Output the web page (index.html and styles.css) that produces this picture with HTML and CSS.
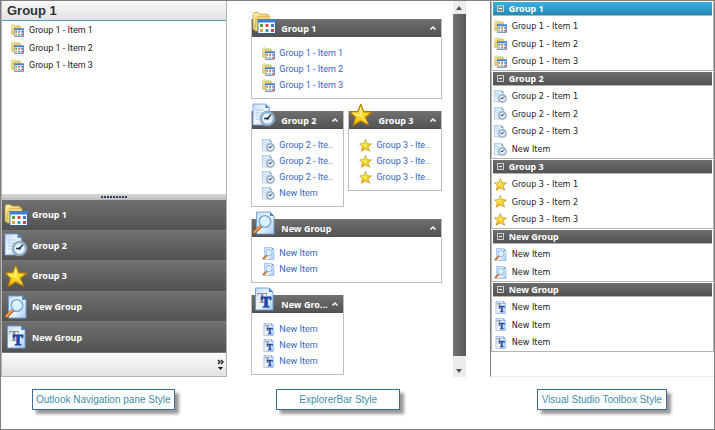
FILE: index.html
```html
<!DOCTYPE html>
<html lang="en">
<head>
    <meta charset="UTF-8">
    <meta name="viewport" content="width=device-width, initial-scale=1.0">
    <title>Navigation Styles</title>
    <link rel="stylesheet" href="styles.css">
</head>
<body>
    <!-- Shared icons -->
    <svg class="icon-defs" width="0" height="0" aria-hidden="true">
        <defs>
            <linearGradient id="gold" x1="0" y1="0" x2="1" y2="1">
                <stop offset="0" stop-color="#fff3a8"/>
                <stop offset="1" stop-color="#dcae3c"/>
            </linearGradient>
            <linearGradient id="star-fill" x1="0" y1="0" x2="0" y2="1">
                <stop offset="0" stop-color="#ffe95a"/>
                <stop offset="0.5" stop-color="#ffdc28"/>
                <stop offset="1" stop-color="#f5b90a"/>
            </linearGradient>
            <linearGradient id="paper" x1="0" y1="0" x2="1" y2="1">
                <stop offset="0" stop-color="#c3dcfa"/>
                <stop offset="0.5" stop-color="#f2f8ff"/>
                <stop offset="1" stop-color="#a5c8f2"/>
            </linearGradient>
        </defs>
        <symbol id="folder" viewBox="0 0 24 24">
            <path d="M1 3.5 2 1.500h4.500l1.200 1.500H15l2 1.500V10H5v10l-4-1.500z" fill="url(#gold)" stroke="#b98f2b" stroke-width=".6"/>
            <path d="M3 20 4 7.500 6 5.500h12V9H6v11z" fill="#f3d775" stroke="#c39c38" stroke-width=".5"/>
            <rect x="6" y="8.500" width="17.500" height="14" fill="#fdfdff" stroke="#346bb5" stroke-width=".8"/>
            <path d="M6 8.500h17.500v3H6z" fill="#3c7fd8"/>
            <path d="M6.500 22.500h17V11" fill="none" stroke="#2c5c9e"/>
            <path d="M8 13h3v3H8z" fill="#4fa43b"/>
            <path d="M13.500 13h3v3h-3z" fill="#d5523e"/>
            <path d="M19 13h3v3h-3z" fill="#4778c8"/>
            <path d="M8 18h3v3H8z" fill="#f09d28"/>
            <path d="M13.500 18h3v3h-3z" fill="#3a9fbb"/>
            <path d="M19 18h3v3h-3z" fill="#c94545"/>
        </symbol>
        <symbol id="clock" viewBox="0 0 24 24">
            <path d="M1 1h12.500l4 4v17H1z" fill="url(#paper)" stroke="#6b9bd8" stroke-width=".8"/>
            <path d="M13.500 1v4h4z" fill="#3f86dd"/>
            <path d="M4 7h8M4 10h6M4 13h4M4 16h3" stroke="#9ec1ea" stroke-width=".8"/>
            <circle cx="15.500" cy="15.500" r="7.500" fill="#a8b2bd" stroke="#8796a6" stroke-width=".7"/>
            <circle cx="15.500" cy="15.500" r="5.800" fill="#eaf4fd" stroke="#7fb0e2" stroke-width="1.200"/>
            <path d="M19 11.800l-3.500 3.700h-3.500" fill="none" stroke="#24394f" stroke-width="1.500"/>
            <circle cx="15.500" cy="15.500" r="1.300" fill="#24394f"/>
        </symbol>
        <symbol id="star" viewBox="0 0 24 24">
            <path d="M11.800 1.200 14.700 8.800 22.800 9.200 16.600 14.300 19.500 22.300 11.700 18 4.200 22.500 6.400 14.300 1.200 9 8.700 8.700z" fill="url(#star-fill)" stroke="#b57b08" stroke-width="1.200" stroke-linejoin="round"/>
            <path d="M11.800 4v9l-8-3M11.800 13l6.500 7" fill="none" stroke="#fff6a6" stroke-width="1"/>
        </symbol>
        <symbol id="search" viewBox="0 0 24 24">
            <path d="M4.500 1H18l4 4v18H4.500z" fill="url(#paper)" stroke="#6b9bd8" stroke-width=".9"/>
            <path d="M18 1v4h4z" fill="#3f86dd"/>
            <path d="M2.500 21.500l7-7" stroke="#a9561d" stroke-width="3.400" stroke-linecap="round"/>
            <path d="M2.500 21l6.500-6.500" stroke="#f3a35b" stroke-width="1.800" stroke-linecap="round"/>
            <circle cx="13" cy="10.500" r="5.800" fill="#d9f1ff" stroke="#7fa9d6" stroke-width="1.500"/>
            <path d="M9.500 9.500q1-3 4-3" fill="none" stroke="#fff" stroke-width="1.500"/>
        </symbol>
        <symbol id="text" viewBox="0 0 24 24">
            <path d="M3.500 1H17l4 4v18H3.500z" fill="url(#paper)" stroke="#6b9bd8" stroke-width=".9"/>
            <path d="M17 1v4h4z" fill="#3f86dd"/>
            <text x="5" y="15.500" class="glyph glyph-back">T</text>
            <text x="9" y="19.500" class="glyph glyph-front">T</text>
        </symbol>
        <symbol id="chevron" viewBox="0 0 8 8">
            <path d="M1.500 5.500 4 3l2.500 2.500" fill="none" stroke="currentColor" stroke-width="1.500"/>
        </symbol>
    </svg>

    <main class="styles">
        <figure class="style">
            <div class="pane outlook">
                <h2 class="outlook-title">Group 1</h2>
                <ul class="items outlook-items">
                    <li><a href="#"><svg class="icon"><use href="#folder"/></svg>Group 1 - Item 1</a></li>
                    <li><a href="#"><svg class="icon"><use href="#folder"/></svg>Group 1 - Item 2</a></li>
                    <li><a href="#"><svg class="icon"><use href="#folder"/></svg>Group 1 - Item 3</a></li>
                </ul>
                <div class="splitter"><span class="grip"></span></div>
                <div class="outlook-groups">
                    <button class="outlook-group"><svg class="icon-lg"><use href="#folder"/></svg>Group 1</button>
                    <button class="outlook-group"><svg class="icon-lg"><use href="#clock"/></svg>Group 2</button>
                    <button class="outlook-group"><svg class="icon-lg"><use href="#star"/></svg>Group 3</button>
                    <button class="outlook-group"><svg class="icon-lg"><use href="#search"/></svg>New Group</button>
                    <button class="outlook-group"><svg class="icon-lg"><use href="#text"/></svg>New Group</button>
                </div>
                <div class="outlook-footer">
                    <button class="more-btn" aria-label="Configure buttons">
                        <svg width="7" height="12" viewBox="0 0 7 12">
                            <path d="M1 1l2 2-2 2M4 1l2 2-2 2" fill="none" stroke="#111" stroke-width="1.300"/>
                            <path d="M1 8h5l-2.500 3z" fill="#111"/>
                        </svg>
                    </button>
                </div>
            </div>
            <figcaption class="caption caption-outlook">Outlook Navigation pane Style</figcaption>
        </figure>

        <figure class="style">
            <div class="pane explorer">
                <div class="explorer-groups">
                    <section class="box wide">
                        <button class="box-header"><svg class="icon-lg"><use href="#folder"/></svg><span>Group 1</span><svg class="chevron"><use href="#chevron"/></svg></button>
                        <ul class="items box-items">
                            <li><a href="#"><svg class="icon"><use href="#folder"/></svg>Group 1 - Item 1</a></li>
                            <li><a href="#"><svg class="icon"><use href="#folder"/></svg>Group 1 - Item 2</a></li>
                            <li><a href="#"><svg class="icon"><use href="#folder"/></svg>Group 1 - Item 3</a></li>
                        </ul>
                    </section>
                    <section class="box">
                        <button class="box-header"><svg class="icon-lg"><use href="#clock"/></svg><span>Group 2</span><svg class="chevron"><use href="#chevron"/></svg></button>
                        <ul class="items box-items">
                            <li><a href="#"><svg class="icon"><use href="#clock"/></svg>Group 2 - Ite..</a></li>
                            <li><a href="#"><svg class="icon"><use href="#clock"/></svg>Group 2 - Ite..</a></li>
                            <li><a href="#"><svg class="icon"><use href="#clock"/></svg>Group 2 - Ite..</a></li>
                            <li><a href="#"><svg class="icon"><use href="#clock"/></svg>New Item</a></li>
                        </ul>
                    </section>
                    <section class="box">
                        <button class="box-header"><svg class="icon-lg"><use href="#star"/></svg><span>Group 3</span><svg class="chevron"><use href="#chevron"/></svg></button>
                        <ul class="items box-items">
                            <li><a href="#"><svg class="icon"><use href="#star"/></svg>Group 3 - Ite..</a></li>
                            <li><a href="#"><svg class="icon"><use href="#star"/></svg>Group 3 - Ite..</a></li>
                            <li><a href="#"><svg class="icon"><use href="#star"/></svg>Group 3 - Ite..</a></li>
                        </ul>
                    </section>
                    <section class="box wide">
                        <button class="box-header"><svg class="icon-lg"><use href="#search"/></svg><span>New Group</span><svg class="chevron"><use href="#chevron"/></svg></button>
                        <ul class="items box-items">
                            <li><a href="#"><svg class="icon"><use href="#search"/></svg>New Item</a></li>
                            <li><a href="#"><svg class="icon"><use href="#search"/></svg>New Item</a></li>
                        </ul>
                    </section>
                    <section class="box">
                        <button class="box-header"><svg class="icon-lg"><use href="#text"/></svg><span>New Gro...</span><svg class="chevron"><use href="#chevron"/></svg></button>
                        <ul class="items box-items">
                            <li><a href="#"><svg class="icon"><use href="#text"/></svg>New Item</a></li>
                            <li><a href="#"><svg class="icon"><use href="#text"/></svg>New Item</a></li>
                            <li><a href="#"><svg class="icon"><use href="#text"/></svg>New Item</a></li>
                        </ul>
                    </section>
                </div>
                <div class="scrollbar">
                    <button class="scroll-btn" aria-label="Scroll up"><svg width="6" height="4" viewBox="0 0 6 4"><path d="M0 4 3 0l3 4z" fill="#555"/></svg></button>
                    <div class="scroll-thumb"></div>
                    <button class="scroll-btn scroll-down" aria-label="Scroll down"><svg width="6" height="4" viewBox="0 0 6 4"><path d="M0 0h6L3 4z" fill="#555"/></svg></button>
                </div>
            </div>
            <figcaption class="caption caption-explorer">ExplorerBar Style</figcaption>
        </figure>

        <figure class="style">
            <div class="pane toolbox">
                <section class="tool-group">
                    <button class="tool-header selected"><span class="minus"></span>Group 1</button>
                    <ul class="items tool-items">
                        <li><a href="#"><svg class="icon"><use href="#folder"/></svg>Group 1 - Item 1</a></li>
                        <li><a href="#"><svg class="icon"><use href="#folder"/></svg>Group 1 - Item 2</a></li>
                        <li><a href="#"><svg class="icon"><use href="#folder"/></svg>Group 1 - Item 3</a></li>
                    </ul>
                </section>
                <section class="tool-group">
                    <button class="tool-header"><span class="minus"></span>Group 2</button>
                    <ul class="items tool-items">
                        <li><a href="#"><svg class="icon"><use href="#clock"/></svg>Group 2 - Item 1</a></li>
                        <li><a href="#"><svg class="icon"><use href="#clock"/></svg>Group 2 - Item 2</a></li>
                        <li><a href="#"><svg class="icon"><use href="#clock"/></svg>Group 2 - Item 3</a></li>
                        <li><a href="#"><svg class="icon"><use href="#clock"/></svg>New Item</a></li>
                    </ul>
                </section>
                <section class="tool-group">
                    <button class="tool-header"><span class="minus"></span>Group 3</button>
                    <ul class="items tool-items">
                        <li><a href="#"><svg class="icon"><use href="#star"/></svg>Group 3 - Item 1</a></li>
                        <li><a href="#"><svg class="icon"><use href="#star"/></svg>Group 3 - Item 2</a></li>
                        <li><a href="#"><svg class="icon"><use href="#star"/></svg>Group 3 - Item 3</a></li>
                    </ul>
                </section>
                <section class="tool-group">
                    <button class="tool-header"><span class="minus"></span>New Group</button>
                    <ul class="items tool-items">
                        <li><a href="#"><svg class="icon"><use href="#search"/></svg>New Item</a></li>
                        <li><a href="#"><svg class="icon"><use href="#search"/></svg>New Item</a></li>
                    </ul>
                </section>
                <section class="tool-group">
                    <button class="tool-header"><span class="minus"></span>New Group</button>
                    <ul class="items tool-items">
                        <li><a href="#"><svg class="icon"><use href="#text"/></svg>New Item</a></li>
                        <li><a href="#"><svg class="icon"><use href="#text"/></svg>New Item</a></li>
                        <li><a href="#"><svg class="icon"><use href="#text"/></svg>New Item</a></li>
                    </ul>
                </section>
            </div>
            <figcaption class="caption caption-toolbox">Visual Studio Toolbox Style</figcaption>
        </figure>
    </main>
</body>
</html>
```

FILE: styles.css
```css
* {
    box-sizing: border-box;
}

body {
    margin: 0;
    background: #fff;
    font-family: Roboto, "Liberation Sans", sans-serif;
    font-size: 9px;
    color: #222;
}

button {
    margin: 0;
    padding: 0;
    border: none;
    background: none;
    font: bold 9px "Noto Sans", sans-serif;
    color: #fff;
    text-align: left;
    cursor: pointer;
}

.icon-defs {
    position: absolute;
}

.glyph {
    font: bold 15px "Liberation Serif", serif;
}

.glyph-back {
    fill: #8a8f96;
}

.glyph-front {
    fill: #1746a8;
    stroke: #1746a8;
    stroke-width: 1px;
}

.icon {
    width: 13px;
    height: 13px;
    flex: none;
}

.icon-lg {
    width: 24px;
    height: 24px;
    flex: none;
}

.styles {
    display: grid;
    grid-template-columns: 226fr 214fr 224fr;
    column-gap: 24px;
    min-height: 100vh;
    border: 1px solid #808080;
}

.style {
    display: flex;
    flex-direction: column;
    align-items: flex-start;
    margin: 0;
    padding-bottom: 19px;
}

.pane {
    flex: 1;
    width: 100%;
}

.items {
    margin: 0;
    padding: 0;
    list-style: none;
}

.items a {
    display: flex;
    align-items: center;
    height: 100%;
    color: #222;
    text-decoration: none;
    white-space: nowrap;
}

.items li {
    height: 18px;
}

.items li:nth-child(even) {
    height: 17px;
}

/* Outlook pane */
.outlook {
    display: flex;
    flex-direction: column;
    border: 1px solid #b4b4b4;
    border-top: none;
}

.outlook-title {
    margin: 0;
    padding: 2px 5px;
    border-bottom: 1px solid #4ba3bf;
    background: linear-gradient(#f8f8f8, #e2e2e2);
    font: bold 13px/15px "Liberation Sans", sans-serif;
    color: #333;
}

.outlook-items {
    flex: 1;
}

.outlook-items a {
    gap: 5px;
    padding-left: 9px;
}

.splitter {
    display: flex;
    align-items: center;
    justify-content: center;
    height: 6px;
    background: linear-gradient(#d8d8d8, #bdbdbd);
}

.grip {
    width: 27px;
    height: 2px;
    background: repeating-linear-gradient(90deg, #35405e 0 2px, transparent 2px 3px);
}

.outlook-groups {
    display: grid;
    grid-auto-rows: 1fr;
    min-height: 153px;
}

.outlook-group {
    display: flex;
    align-items: center;
    gap: 4px;
    padding-left: 2px;
    border-bottom: 1px solid #777;
    background: linear-gradient(#707070, #525252);
}

.outlook-footer {
    display: flex;
    align-items: center;
    justify-content: flex-end;
    height: 23px;
    padding-right: 2px;
    background: linear-gradient(#fcfcfc, #e2e2e2);
}

.more-btn {
    display: flex;
}

/* Explorer bar */
.explorer {
    display: flex;
    justify-content: space-between;
    gap: 11px;
}

.explorer-groups {
    flex: 1;
    display: grid;
    grid-template-columns: 1fr 1fr;
    align-items: start;
    align-content: start;
    gap: 12px 4px;
    padding-top: 18px;
}

.box {
    border: 1px solid #bdbdbd;
    border-top: none;
}

.wide {
    grid-column: 1 / -1;
}

.box-header {
    position: relative;
    display: flex;
    align-items: center;
    justify-content: space-between;
    width: 100%;
    height: 18px;
    padding: 0 4px 0 29px;
    background: linear-gradient(#707070, #525252);
}

/* the large icon sticks out above the header */
.box-header .icon-lg {
    position: absolute;
    left: 0;
    bottom: 2px;
}

.chevron {
    width: 8px;
    height: 8px;
}

.box-items {
    padding: 8px 0 5px 10px;
}

.box-items li,
.box-items li:nth-child(even) {
    height: 16px;
}

.box-items a {
    gap: 4px;
    color: #3565c8;
}

.scrollbar {
    display: flex;
    flex-direction: column;
    width: 13px;
}

.scroll-btn {
    display: flex;
    align-items: center;
    justify-content: center;
    height: 13px;
    background: #ececec;
}

.scroll-down {
    height: 21px;
    padding-top: 8px;
}

.scroll-thumb {
    flex: 1;
    background: linear-gradient(90deg, #747474, #575757);
}

/* Toolbox */
.toolbox {
    border-left: 1px solid #808080;
    border-bottom: 1px solid #eee;
}

.tool-group {
    padding: 0 1px;
    border-bottom: 1px solid #b4b4b4;
    border-left: 1px solid #b4b4b4;
    border-right: 1px solid #b4b4b4;
}

.tool-header {
    display: flex;
    align-items: center;
    gap: 5px;
    width: 100%;
    height: 14px;
    margin-top: 1px;
    padding-left: 4px;
    border-bottom: 1px solid #b4b4b4;
    background: linear-gradient(#6e6e6e, #525252);
}

.tool-header.selected {
    background: linear-gradient(#3bb0e0, #2489b8);
}

.minus {
    display: flex;
    align-items: center;
    justify-content: center;
    width: 7px;
    height: 7px;
    border: 1px solid #ccc;
    background: #666;
}

.selected .minus {
    background: #8094a0;
}

.minus::before {
    content: "";
    width: 3px;
    height: 1px;
    background: #fff;
}

.tool-items {
    padding-top: 1px;
    font-family: "DejaVu Sans Condensed", "Noto Sans", sans-serif;
}

.tool-items li:last-child {
    height: 18px;
}

.tool-items a {
    gap: 5px;
    padding-left: 1px;
}

/* Captions */
.caption {
    margin-top: 12px;
    padding: 0 3px;
    border: 1px solid #416b9c;
    background: #fff;
    box-shadow: 4px 4px 3px #999;
    font: 10px/19px "Liberation Sans", sans-serif;
    color: #3f8ea8;
}

.caption-outlook {
    margin-left: 31px;
}

.caption-explorer {
    margin-left: 25px;
    padding: 0 22px;
}

.caption-toolbox {
    margin-left: 47px;
    padding: 0 4px;
}
```
